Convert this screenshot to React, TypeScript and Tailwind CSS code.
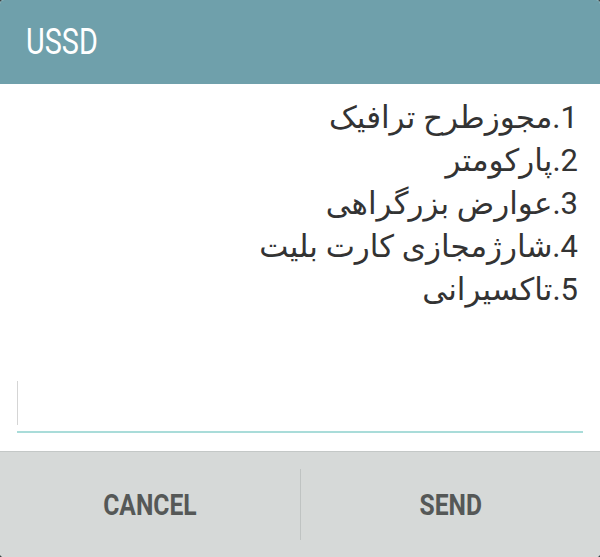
import React from 'react';

const items = [
  '1.مجوزطرح ترافیک',
  '2.پارکومتر',
  '3.عوارض بزرگراهی',
  '4.شارژمجازی کارت بلیت',
  '5.تاکسیرانی',
];

const App: React.FC = () => {
  return (
    <div className="w-[600px] h-[557px] bg-[#3b4648] font-['Roboto',sans-serif]">
      <div className="flex h-full flex-col overflow-hidden rounded-[4px] bg-white">
        {/* title bar */}
        <div className="flex h-[84px] shrink-0 items-center bg-[#6fa0ab] px-[26px]">
          <span className="inline-block origin-left scale-x-[0.8] text-[36px] leading-none text-white">USSD</span>
        </div>

        {/* message */}
        <div
          dir="rtl"
          className="flex flex-col pt-[12px] pr-[22px] font-['Roboto','DejaVu_Sans',sans-serif] text-[31px] leading-[43px] text-[#333333]"
        >
          {items.map((t) => (
            <div key={t}>{t}</div>
          ))}
        </div>

        {/* input */}
        <div className="mt-auto px-[17px] pb-[18px]">
          <div className="flex h-[52px] items-start border-b-2 border-[#a9dcd9]">
            <div className="h-[44px] w-[1px] bg-[#d5d5d5]" />
          </div>
        </div>

        {/* buttons */}
        <div className="flex h-[106px] shrink-0 items-center border-t border-[#c4c8c7] bg-[#d6d9d8]">
          <button className="flex h-full flex-1 items-center justify-center pt-[3px]">
            <span className="inline-block scale-x-[0.85] text-[29px] font-bold text-[#555857]">CANCEL</span>
          </button>
          <div className="h-[71px] w-px bg-[#bfc3c2]" />
          <button className="flex h-full flex-1 items-center justify-center pt-[3px]">
            <span className="inline-block scale-x-[0.85] text-[29px] font-bold text-[#555857]">SEND</span>
          </button>
        </div>
      </div>
    </div>
  );
};

export default App;
